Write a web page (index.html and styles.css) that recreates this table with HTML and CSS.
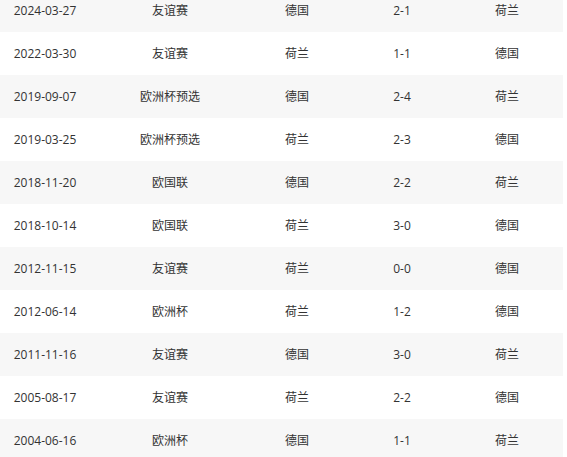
FILE: index.html
```html
<!DOCTYPE html>
<html lang="zh">
<head>
<meta charset="utf-8">
<link rel="stylesheet" href="styles.css">
</head>
<body>
<div class="table">
  <div class="row odd first"><span>2024-03-27</span><span>友谊赛</span><span>德国</span><span>2-1</span><span>荷兰</span></div>
  <div class="row"><span>2022-03-30</span><span>友谊赛</span><span>荷兰</span><span>1-1</span><span>德国</span></div>
  <div class="row odd"><span>2019-09-07</span><span>欧洲杯预选</span><span>德国</span><span>2-4</span><span>荷兰</span></div>
  <div class="row"><span>2019-03-25</span><span>欧洲杯预选</span><span>荷兰</span><span>2-3</span><span>德国</span></div>
  <div class="row odd"><span>2018-11-20</span><span>欧国联</span><span>德国</span><span>2-2</span><span>荷兰</span></div>
  <div class="row"><span>2018-10-14</span><span>欧国联</span><span>荷兰</span><span>3-0</span><span>德国</span></div>
  <div class="row odd"><span>2012-11-15</span><span>友谊赛</span><span>荷兰</span><span>0-0</span><span>德国</span></div>
  <div class="row"><span>2012-06-14</span><span>欧洲杯</span><span>荷兰</span><span>1-2</span><span>德国</span></div>
  <div class="row odd"><span>2011-11-16</span><span>友谊赛</span><span>德国</span><span>3-0</span><span>荷兰</span></div>
  <div class="row"><span>2005-08-17</span><span>友谊赛</span><span>荷兰</span><span>2-2</span><span>德国</span></div>
  <div class="row odd"><span>2004-06-16</span><span>欧洲杯</span><span>德国</span><span>1-1</span><span>荷兰</span></div>
</div>
</body>
</html>
```

FILE: styles.css
```css
html, body {
  margin: 0;
  padding: 0;
  background: #ffffff;
}
body {
  font-family: "Open Sans", "Noto Sans CJK SC", sans-serif;
  font-size: 12px;
  color: #333333;
  overflow: hidden;
}
.table {
  width: 563px;
  margin-top: -11px;
}
.row {
  display: grid;
  grid-template-columns: 90px 160px 94px 116px 94px;
  height: 43px;
  align-items: center;
  background: #ffffff;
}
.row.odd {
  background: #f7f7f7;
}
.row span {
  text-align: center;
  line-height: 16px;
}
```
